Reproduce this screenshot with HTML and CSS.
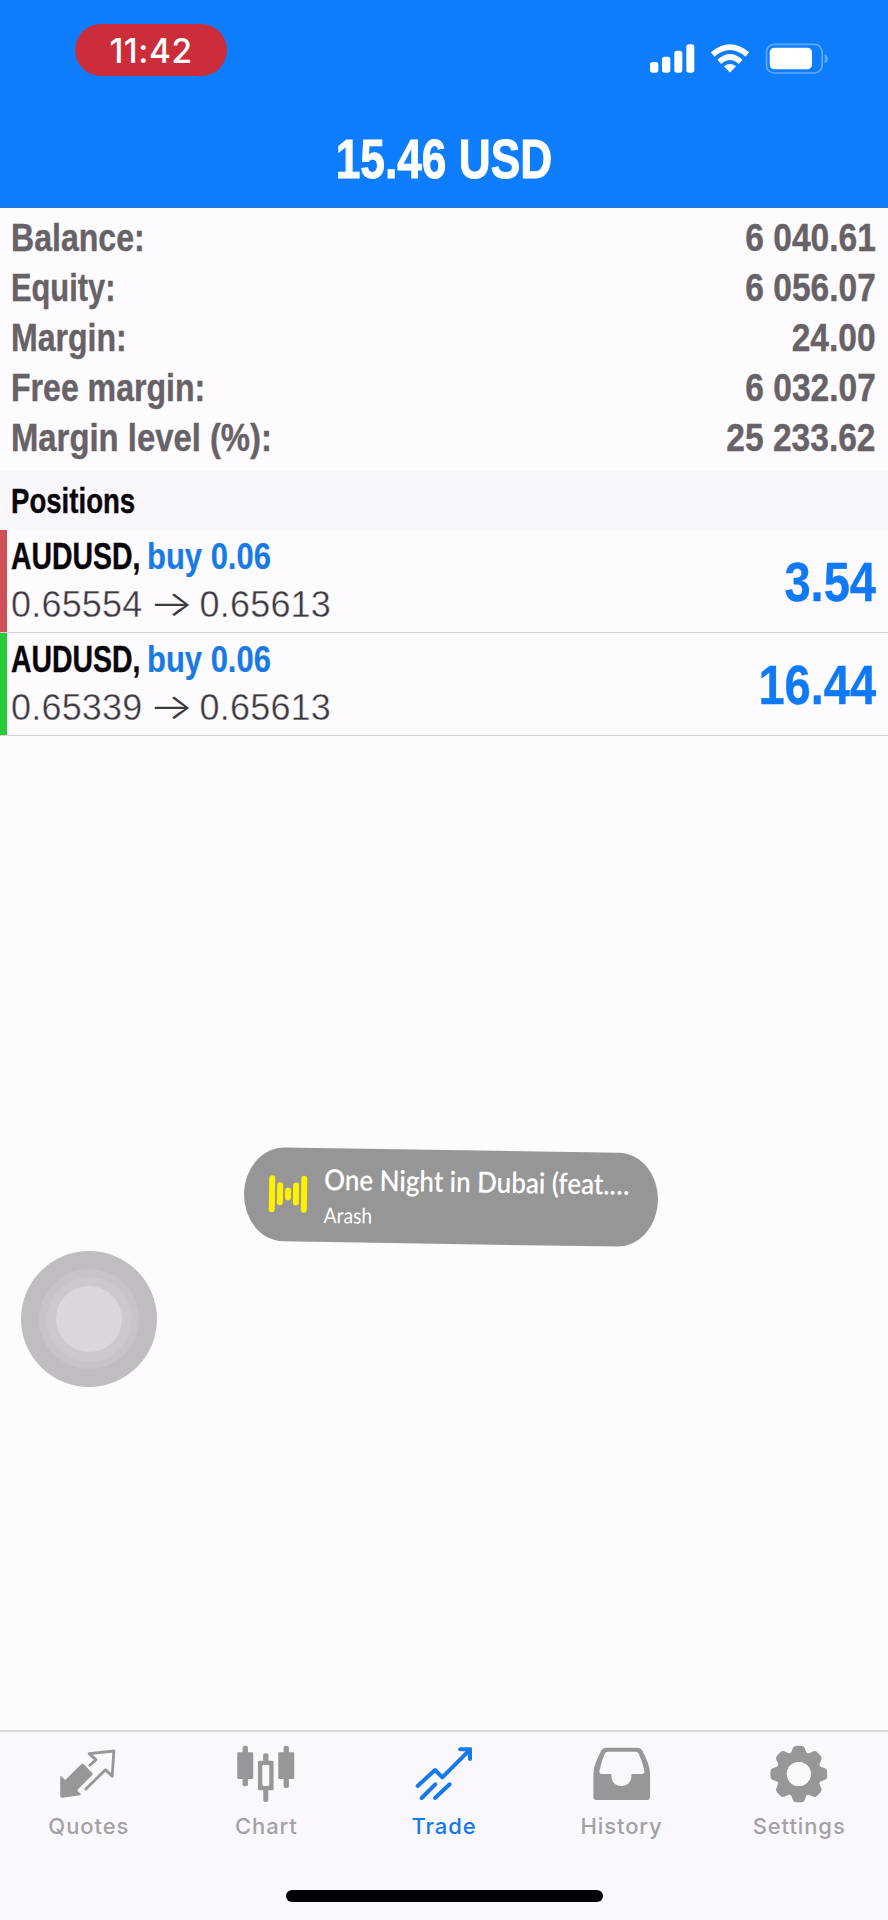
FILE: index.html
```html
<!DOCTYPE html>
<html lang="en">
<head>
<meta charset="utf-8">
<title>Trade</title>
<link rel="stylesheet" href="styles.css">
</head>
<body>
<div class="screen">
  <header class="top">
    <div class="status">
      <div class="clock">11:42</div>
      <div class="indicators">
        <svg width="46.67" height="30.67" viewBox="614 130 140 92" fill="#fff"><rect x="617" y="187" width="25" height="32" rx="8"/><rect x="653" y="171" width="25" height="48" rx="8"/><rect x="690" y="153" width="24" height="66" rx="8"/><rect x="726" y="134" width="24" height="85" rx="8"/></svg>
        <svg width="40" height="30.67" viewBox="798 130 120 92"><g fill="none" stroke="#fff" stroke-width="17"><path d="M806 164.500Q858 120.500 910 164.500"/><path d="M826 186.500Q858 157.500 890 186.500"/></g><path d="M840 200Q858 186 876 200L860 217Q858 219 856 217Z" fill="#fff"/></svg>
        <svg width="64" height="30.67" viewBox="964 130 192 92"><rect x="968.500" y="134" width="167" height="86" rx="23" fill="none" stroke="#5fa9fd" stroke-width="5"/><rect x="978" y="144" width="127" height="65" rx="14" fill="#fff"/><path d="M1143 163Q1153 168 1153 177T1143 191Z" fill="#5fa9fd"/></svg>
      </div>
    </div>
    <h1 class="total"><span class="cond">15.46 USD</span></h1>
  </header>

  <main class="content">
    <section class="summary">
      <div class="line"><span class="cond label">Balance:</span><span class="cond value">6 040.61</span></div>
      <div class="line"><span class="cond label label-tight">Equity:</span><span class="cond value">6 056.07</span></div>
      <div class="line"><span class="cond label">Margin:</span><span class="cond value">24.00</span></div>
      <div class="line"><span class="cond label">Free margin:</span><span class="cond value">6 032.07</span></div>
      <div class="line"><span class="cond label label-loose">Margin level (%):</span><span class="cond value">25 233.62</span></div>
    </section>
    <h2 class="section-title"><span class="cond">Positions</span></h2>
    <article class="position">
      <div class="mark mark-red"></div>
      <div class="info">
        <div class="deal"><span class="cond symbol">AUDUSD,</span><span class="cond side">buy 0.06</span></div>
        <div class="prices"><span>0.65554</span><span class="arrow">→</span><span>0.65613</span></div>
      </div>
      <div class="profit"><span class="cond">3.54</span></div>
    </article>
    <article class="position">
      <div class="mark mark-green"></div>
      <div class="info">
        <div class="deal"><span class="cond symbol">AUDUSD,</span><span class="cond side">buy 0.06</span></div>
        <div class="prices"><span>0.65339</span><span class="arrow">→</span><span>0.65613</span></div>
      </div>
      <div class="profit"><span class="cond">16.44</span></div>
    </article>
  </main>

  <nav class="tabs">
    <a class="tab"><svg width="60" height="62" viewBox="176.400 81 180 186"><path d="M243 148Q247 145 251 148L276 174Q279 177 276 180L233 223L232 228L242 237Q243 240 239 241L186 248Q180 248 180 243V186Q181 181 185 185L195 195Z" fill="currentColor"/><path d="M269 151L287 134L267 116L341 108L336 184L316 164L257 222" fill="none" stroke="currentColor" stroke-width="8.500" stroke-linecap="round" stroke-linejoin="round"/></svg><span>Quotes</span></a>
    <a class="tab"><svg width="60" height="62" viewBox="709.200 81 180 186" fill="currentColor"><rect x="729" y="92" width="16" height="122" rx="6"/><rect x="713" y="112" width="48" height="80" rx="4"/><rect x="852" y="92" width="16" height="127" rx="6"/><rect x="836" y="112" width="48" height="80" rx="4"/><rect x="790.500" y="115" width="16" height="35" rx="6"/><rect x="791" y="215" width="15" height="46" rx="6"/><path fill-rule="evenodd" d="M779 137H818Q822 137 822 141V222Q822 226 818 226H779Q775 226 775 222V141Q775 137 779 137ZM793 149Q788 149 788 154V208Q788 213 793 213H804Q809 213 809 208V154Q809 149 804 149Z"/></svg><span>Chart</span></a>
    <a class="tab tab-active"><svg width="60" height="62" viewBox="282 81 180 186"><g fill="none" stroke="currentColor" stroke-width="12" stroke-linecap="round" stroke-linejoin="round"><path d="M293 213L345 165L367 187L447 107"/><path d="M305 249L346 208"/><path d="M345 249L389 208"/></g><path d="M420 97H452Q456 97 456 101V132Q456 138 450 138Q444 138 444 131V117L436 109H420Q414 108 414 103T420 97Z" fill="currentColor"/></svg><span>Trade</span></a>
    <a class="tab"><svg width="60" height="62" viewBox="64.800 81 180 186"><path fill="currentColor" fill-rule="evenodd" d="M106 98H202Q211 98 215 106Q239 150 239 176V246Q239 255 230 255H78Q69 255 69 246V176Q69 150 93 106Q97 98 106 98ZM113 110Q106 110 103 116Q92 142 87 168Q86 177 93 177H123V182C123 202 136 213 153 213S183 202 183 182V177H214Q223 177 222 168Q217 142 205 116Q202 110 195 110Z"/></svg><span>History</span></a>
    <a class="tab"><svg width="60" height="62" viewBox="597.600 81 180 186"><defs><path id="tooth" d="M657 120Q666 113 669 100Q672 92 679 92H695Q702 92 705 100Q708 113 717 120Z"/></defs><g fill="currentColor"><use href="#tooth"/><use href="#tooth" transform="rotate(45 687 177)"/><use href="#tooth" transform="rotate(90 687 177)"/><use href="#tooth" transform="rotate(135 687 177)"/><use href="#tooth" transform="rotate(180 687 177)"/><use href="#tooth" transform="rotate(225 687 177)"/><use href="#tooth" transform="rotate(270 687 177)"/><use href="#tooth" transform="rotate(315 687 177)"/></g><circle cx="687" cy="177" r="50.500" fill="none" stroke="currentColor" stroke-width="29"/><circle cx="687" cy="177" r="36" fill="#fbf8fd"/></svg><span>Settings</span></a>
  </nav>
  <div class="home"></div>

  <div class="song">
    <svg class="bars" width="40" height="40" viewBox="0 0 40 40" stroke="#fff000" stroke-width="6" stroke-linecap="round"><path d="M4 4V35M12 11V28M20 16V23M28 11V28M36 4V35"/></svg>
    <div class="song-text">
      <div class="song-title">One Night in Dubai (feat.…</div>
      <div class="song-artist">Arash</div>
    </div>
  </div>
  <div class="touch"><div class="ring"><div class="ring-inner"><div class="dot"></div></div></div></div>
</div>
</body>
</html>
```
FILE: styles.css
```css
body {
  margin: 0;
}

.screen {
  position: relative;
  display: flex;
  flex-direction: column;
  width: 888px;
  height: 1920px;
  overflow: hidden;
  background: #fdfbfe;
  font-family: "Liberation Sans", Arial, sans-serif;
}

/* Bold text squeezed to a condensed width */
.cond {
  display: inline-block;
  font-weight: 700;
  white-space: pre;
  transform: scaleX(var(--squeeze));
  transform-origin: left center;
  -webkit-text-stroke: 0.4px currentColor;
}

.top {
  box-sizing: border-box;
  height: 208px;
  border-bottom: 1px solid #2c79cf;
  background: #0d7dfc;
  color: #fff;
}

.status {
  display: flex;
  justify-content: space-between;
  align-items: flex-start;
  height: 75px;
  padding: 24px 58.7px 0 75px;
}

.clock {
  width: 152px;
  height: 52px;
  border-radius: 26px;
  background: #cc2d3a;
  font: 500 33.5px/55px Inter, sans-serif;
  letter-spacing: 0.5px;
  text-align: center;
}

.indicators {
  display: flex;
  gap: 15px;
  padding-top: 19.3px;
}

.total {
  --squeeze: 0.79;
  margin: 0;
  padding-top: 25px;
  font-size: 56px;
  line-height: 70px;
  text-align: center;
}

.total .cond {
  transform-origin: center;
  -webkit-text-stroke-width: 1px;
}

.content {
  flex: 1;
}

.summary {
  box-sizing: border-box;
  height: 263px;
  padding: 5px 12px 0 11px;
  color: #666267;
  font-size: 39px;
  line-height: 50px;
}

.line {
  display: flex;
  justify-content: space-between;
}

.label {
  --squeeze: 0.822;
}

.label-tight {
  --squeeze: 0.79;
}

.label-loose {
  --squeeze: 0.842;
}

.value {
  --squeeze: 0.86;
  transform-origin: right center;
}

.section-title {
  --squeeze: 0.8;
  height: 59px;
  margin: 0;
  padding-left: 11px;
  background: #faf7fc;
  color: #09060b;
  font-size: 34.5px;
  line-height: 61px;
}

.position {
  display: flex;
  box-sizing: border-box;
  height: 103px;
  border-bottom: 1px solid #d5d2d8;
}

.mark {
  width: 7px;
}

.mark-red {
  background: #cf5056;
}

.mark-green {
  background: #25cc38;
}

.info {
  flex: 1;
  padding: 4px 0 0 4px;
}

.deal {
  display: flex;
  font-size: 36.5px;
  line-height: 46px;
}

.symbol {
  --squeeze: 0.778;
  width: 136px;
  color: #09060b;
}

.side {
  --squeeze: 0.848;
  color: #187ae4;
  -webkit-text-stroke-width: 0.2px;
}

.prices {
  display: flex;
  color: #3d3940;
  font-size: 36px;
  line-height: 49px;
  letter-spacing: 0.2px;
  -webkit-text-stroke: 0.4px #fdfbfe;
}

.arrow {
  width: 57px;
  font-family: Inter, sans-serif;
  font-weight: 300;
  line-height: 46px;
  text-align: center;
  transform: scaleX(1.3);
  -webkit-text-stroke: 0;
}

.profit {
  --squeeze: 0.84;
  padding-right: 12px;
  color: #1079f5;
  font-size: 56px;
  line-height: 104px;
}

.profit .cond {
  transform-origin: right center;
}

.tabs {
  display: flex;
  box-sizing: border-box;
  height: 190px;
  padding-top: 10px;
  border-top: 2px solid #dad8dc;
  background: #fbf8fd;
}

.tab {
  display: flex;
  flex: 1;
  flex-direction: column;
  align-items: center;
  color: #99969a;
  font: 450 22px/28px Inter, sans-serif;
  letter-spacing: 0.9px;
}

.tab span {
  margin-top: 8px;
  color: #a4a1a6;
}

.tab-active,
.tab-active span {
  color: #1479ea;
}

.home {
  position: absolute;
  left: 286px;
  bottom: 18px;
  width: 317px;
  height: 12px;
  border-radius: 6px;
  background: #040106;
}

.song {
  position: absolute;
  left: 244px;
  top: 1149.5px;
  display: flex;
  box-sizing: border-box;
  width: 414px;
  height: 94px;
  padding: 27px 0 0 24px;
  border-radius: 40px / 47px;
  background: #969696;
  color: #fff;
  font-family: Lato, sans-serif;
  transform: rotate(0.9deg);
}

.bars {
  flex: none;
}

.song-text {
  margin: -16px 0 0 16px;
  white-space: nowrap;
  transform: scaleX(0.895);
  transform-origin: left center;
}

.song-title {
  font-size: 29px;
  font-weight: 600;
  line-height: 40px;
}

.song-artist {
  font-size: 21.5px;
  line-height: 32px;
}

.touch,
.ring,
.ring-inner {
  display: grid;
  place-items: center;
  border-radius: 50%;
}

.touch {
  position: absolute;
  left: 21px;
  top: 1251px;
  width: 136px;
  height: 136px;
  background: #c0bcc2;
}

.ring {
  width: 100px;
  height: 100px;
  background: #c7c3c9;
}

.ring-inner {
  width: 85px;
  height: 85px;
  background: #ccc8ce;
}

.dot {
  width: 66px;
  height: 66px;
  border-radius: 50%;
  background: #dad6dc;
}
```
